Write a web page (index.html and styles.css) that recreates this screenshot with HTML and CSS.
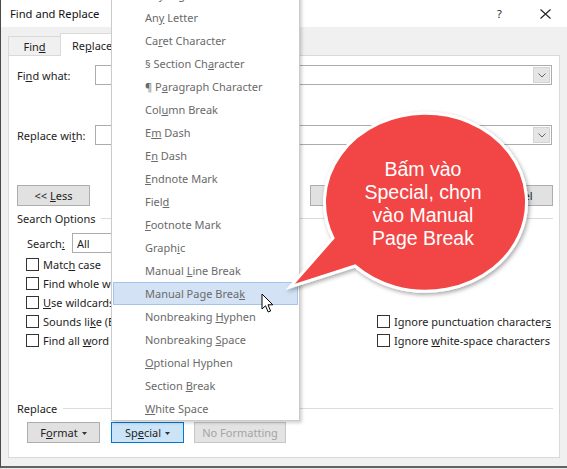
FILE: index.html
```html
<!DOCTYPE html>
<html>
<head>
<meta charset="utf-8">
<link rel="stylesheet" href="styles.css">
</head>
<body>
<div class="window">
  <div class="titlebar">
    <span class="title">Find and Replace</span>
    <span class="help">?</span>
    <svg class="close" width="11" height="10" viewBox="0 0 11 10"><path d="M0.5 0.5 L10.5 9.5 M10.5 0.5 L0.5 9.5" stroke="#222" stroke-width="1.1" fill="none"/></svg>
  </div>
  <div class="content">
    <div class="tabs">
      <div class="tab"><span>Fin<u>d</u></span></div>
      <div class="tab active"><span>Re<u>p</u>lace</span></div>
    </div>
    <div class="panel">
      <div class="field-row">
        <span class="field-label">Fi<u>n</u>d what:</span>
        <div class="combo"><span class="drop"><svg width="8" height="5" viewBox="0 0 8 5"><path d="M0.5 0.5 L4 4 L7.5 0.5" stroke="#666" fill="none"/></svg></span></div>
      </div>
      <div class="field-row second">
        <span class="field-label">Replace wi<u>t</u>h:</span>
        <div class="combo"><span class="drop"><svg width="8" height="5" viewBox="0 0 8 5"><path d="M0.5 0.5 L4 4 L7.5 0.5" stroke="#666" fill="none"/></svg></span></div>
      </div>
      <div class="btn-row">
        <div class="btn less"><span>&lt;&lt; <u>L</u>ess</span></div>
        <div class="btn b-replace"><span><u>R</u>eplace</span></div>
        <div class="btn b-all"><span>Replace <u>A</u>ll</span></div>
        <div class="btn b-next"><span><u>F</u>ind Next</span></div>
        <div class="btn b-cancel"><span>Cancel</span></div>
      </div>
      <div class="group-head"><span>Search Options</span></div>
      <div class="search-row">
        <span class="search-label">Search<u>:</u></span>
        <div class="select">All</div>
      </div>
      <div class="checks">
        <div class="chk"><span class="box"></span><span>Matc<u>h</u> case</span></div>
        <span></span>
        <div class="chk"><span class="box"></span><span>Find whole words onl<u>y</u></span></div>
        <span></span>
        <div class="chk"><span class="box"></span><span><u>U</u>se wildcards</span></div>
        <span></span>
        <div class="chk"><span class="box"></span><span>Sounds li<u>k</u>e (English)</span></div>
        <div class="chk"><span class="box"></span><span>Ignore punctuation character<u>s</u></span></div>
        <div class="chk"><span class="box"></span><span>Find all <u>w</u>ord forms (English)</span></div>
        <div class="chk"><span class="box"></span><span>Ignore <u>w</u>hite-space characters</span></div>
      </div>
      <div class="group-head replace-head"><span>Replace</span></div>
      <div class="bottom-row">
        <div class="btn b-format"><span>F<u>o</u>rmat</span><svg class="tri" width="5" height="3" viewBox="0 0 5 3"><path d="M0 0 H5 L2.5 3 Z" fill="#333"/></svg></div>
        <div class="btn b-special"><span>Sp<u>e</u>cial</span><svg class="tri" width="5" height="3" viewBox="0 0 5 3"><path d="M0 0 H5 L2.5 3 Z" fill="#333"/></svg></div>
        <div class="btn b-noformat"><span>No Formatting</span></div>
      </div>
    </div>
  </div>
</div>

<div class="menu">
  <div class="mi">Any Di<u>g</u>it</div>
  <div class="mi">An<u>y</u> Letter</div>
  <div class="mi">Ca<u>r</u>et Character</div>
  <div class="mi">§ Section Ch<u>a</u>racter</div>
  <div class="mi">¶ P<u>a</u>ragraph Character</div>
  <div class="mi">Col<u>u</u>mn Break</div>
  <div class="mi">E<u>m</u> Dash</div>
  <div class="mi">E<u>n</u> Dash</div>
  <div class="mi"><u>E</u>ndnote Mark</div>
  <div class="mi">Fiel<u>d</u></div>
  <div class="mi"><u>F</u>ootnote Mark</div>
  <div class="mi">Graph<u>i</u>c</div>
  <div class="mi">Manual <u>L</u>ine Break</div>
  <div class="mi hl">Manual Page Brea<u>k</u></div>
  <div class="mi">Nonbreaking <u>H</u>yphen</div>
  <div class="mi">Nonbreaking <u>S</u>pace</div>
  <div class="mi"><u>O</u>ptional Hyphen</div>
  <div class="mi">Section <u>B</u>reak</div>
  <div class="mi"><u>W</u>hite Space</div>
</div>

<svg class="cursor" width="14" height="21" viewBox="0 0 14 21"><path d="M1 1 L1 16 L4.5 12.8 L7.2 19 L9.6 18 L7 11.8 L11.8 11.8 Z" fill="#fff" stroke="#000" stroke-width="1" stroke-linejoin="round"/></svg>

<svg class="callout" width="567" height="469" viewBox="0 0 567 469">
  <defs>
    <filter id="sh" x="-20%" y="-20%" width="140%" height="140%">
      <feDropShadow dx="1.5" dy="2" stdDeviation="2" flood-color="#000" flood-opacity="0.35"/>
    </filter>
  </defs>
  <path d="M333 238 L290 287 L355 266 A101 89 0 1 0 333 238 Z" fill="#f24545" stroke="#fff" stroke-width="3" stroke-linejoin="miter" filter="url(#sh)"/>
</svg>
<div class="callout-text">Bấm vào<br>Special, chọn<br>vào Manual<br>Page Break</div>
</body>
</html>
```

FILE: styles.css
```css
body {
  margin: 0;
  width: 567px;
  height: 469px;
  overflow: hidden;
  position: relative;
  background: #e8e8e8;
  font-family: "Noto Sans", "Open Sans", sans-serif;
  font-size: 11px;
  color: #1e1e1e;
}

u { text-decoration-thickness: 1px; text-underline-offset: 1px; }

.window {
  width: 600px;
  height: 468px;
  box-sizing: border-box;
  border-left: 1px solid #4a4a4a;
  border-bottom: 2px solid #626262;
  background: #f0f0f0;
  display: flex;
  flex-direction: column;
}

.titlebar {
  height: 27px;
  flex: none;
  background: #fff;
  display: flex;
  align-items: center;
  padding-left: 9px;
}
.title { width: 487px; font-size: 11.2px; color: #111; }
.help { width: 43px; font-size: 11px; color: #222; }
.close { display: block; }

.content {
  flex: 1;
  padding: 6px 0 0 7px;
}

.tabs {
  display: flex;
  height: 22px;
  align-items: flex-end;
}
.tab {
  box-sizing: border-box;
  height: 19px;
  width: 53px;
  border: 1px solid #d9d9d9;
  border-bottom: none;
  display: flex;
  align-items: center;
  justify-content: center;
  background: #f0f0f0;
}
.tab.active {
  height: 23px;
  width: 63px;
  margin-left: -1px;
  margin-bottom: -1px;
  background: #fff;
  justify-content: flex-start;
  padding-left: 11px;
  position: relative;
  z-index: 1;
}

.panel {
  box-sizing: border-box;
  width: 552px;
  height: 403px;
  border: 1px solid #d9d9d9;
  background: #fff;
  padding: 9px 6px 0 8px;
}

.field-row {
  display: flex;
  align-items: center;
  height: 20px;
}
.field-row.second { margin-top: 40px; }
.field-label { width: 78px; }
.combo {
  box-sizing: border-box;
  width: 457px;
  height: 20px;
  border: 1px solid #acacac;
  display: flex;
  justify-content: flex-end;
  align-items: stretch;
}
.drop {
  box-sizing: border-box;
  width: 17px;
  margin: 1px;
  background: #e5e5e5;
  border: 1px solid #d4d4d4;
  display: flex;
  align-items: center;
  justify-content: center;
}
.drop svg { display: block; }

.btn {
  box-sizing: border-box;
  height: 21px;
  border: 1px solid #adadad;
  background: #e1e1e1;
  display: flex;
  align-items: center;
  justify-content: center;
  gap: 4px;
  white-space: nowrap;
}
.btn-row {
  margin-top: 40px;
  display: flex;
}
.less { width: 73px; }
.b-replace { width: 75px; margin-left: 45px; }
.b-all { width: 75px; margin-left: 10px; }
.b-next { width: 85px; margin-left: 15px; }
.b-cancel { width: 75px; margin-left: auto; }

.group-head {
  margin-top: 4px;
  height: 16px;
  display: flex;
  align-items: center;
  gap: 5px;
}
.group-head::after {
  content: "";
  flex: 1;
  height: 1px;
  background: #dcdcdc;
}
.replace-head { margin-top: 50px; gap: 6px; }

.search-row {
  margin-top: 7px;
  padding-left: 10px;
  display: flex;
  align-items: center;
  height: 20px;
}
.search-label { width: 45px; }
.select {
  box-sizing: border-box;
  width: 110px;
  height: 20px;
  border: 1px solid #acacac;
  padding-left: 4px;
  display: flex;
  align-items: center;
}

.checks {
  margin-top: 2px;
  padding-left: 9px;
  display: grid;
  grid-template-columns: 351px auto;
  grid-auto-rows: 19px;
}
.chk {
  display: flex;
  align-items: center;
  gap: 4px;
  white-space: nowrap;
}
.box {
  box-sizing: border-box;
  width: 13px;
  height: 13px;
  border: 1px solid #333;
  background: #fff;
  flex: none;
}

.bottom-row {
  margin-top: 6px;
  padding-left: 10px;
  display: flex;
}
.b-format { width: 73px; }
.b-special {
  width: 73px;
  margin-left: 11px;
  background: #cce4f7;
  border-color: #0078d7;
}
.b-noformat {
  width: 92px;
  margin-left: 10px;
  color: #a3a3a3;
  background: #e3e3e3;
  border-color: #c6c6c6;
}
.tri { display: block; margin-top: 1px; }

.menu {
  position: absolute;
  left: 111px;
  top: -18px;
  width: 189px;
  box-sizing: border-box;
  border: 1px solid #cbcbcb;
  background: #fff;
  box-shadow: 2px 2px 3px rgba(0, 0, 0, 0.18);
  z-index: 5;
}
.mi {
  height: 23px;
  line-height: 23px;
  margin: 0 1px;
  padding-left: 32px;
  color: #6a6a6a;
  box-sizing: border-box;
  white-space: nowrap;
}
.mi.hl {
  background: #d3e3f5;
  border: 1px solid #a4c4ea;
  line-height: 21px;
  padding-left: 31px;
}

.cursor {
  position: absolute;
  left: 261px;
  top: 293px;
  z-index: 6;
}

.callout {
  position: absolute;
  left: 0;
  top: 0;
  z-index: 7;
  pointer-events: none;
}
.callout-text {
  position: absolute;
  left: 322px;
  top: 158px;
  width: 202px;
  text-align: center;
  font-family: "Liberation Sans", Arial, sans-serif;
  font-size: 19.5px;
  line-height: 23px;
  color: #fff;
  z-index: 8;
}
```
